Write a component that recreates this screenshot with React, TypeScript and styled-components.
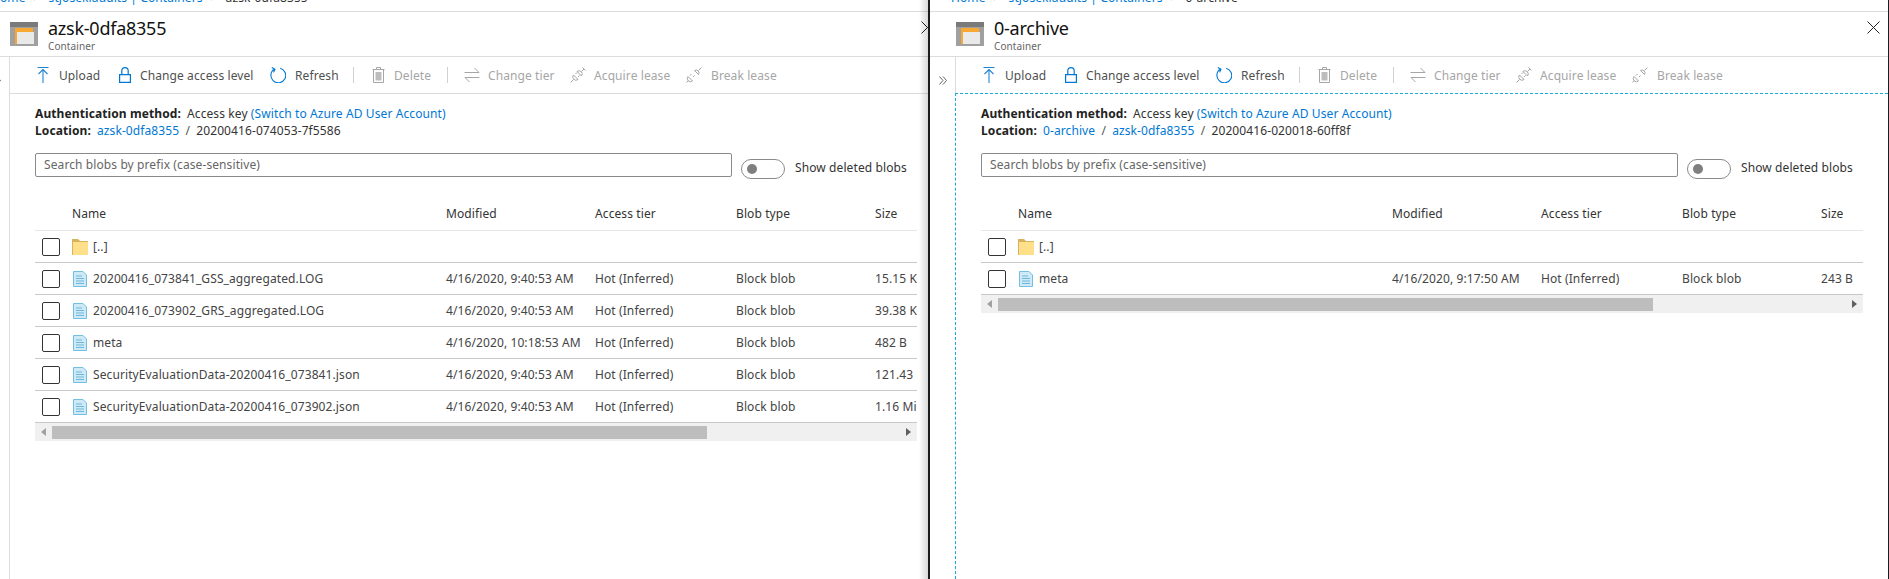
import React from 'react'
import styled, { createGlobalStyle } from 'styled-components'

const GlobalStyle = createGlobalStyle`
  html, body {
    margin: 0;
    padding: 0;
    background: #1b1c20;
  }
  * {
    box-sizing: border-box;
  }
`;

const Page = styled.div`
  display: flex;
  gap: 2px;
  position: relative;
  width: 1889px;
  height: 579px;
  overflow: hidden;
  background: #1b1c20;
  font-family: "Noto Sans", "Open Sans", sans-serif;
  font-size: 12px;
  letter-spacing: 0.1px;
  color: #333;
`;

const Pane = styled.section<{ $width: number }>`
  display: flex;
  flex-direction: column;
  flex: none;
  width: ${(p) => p.$width}px;
  height: 100%;
  overflow: hidden;
  background: #fff;
`;

const ShadowEdge = styled.div`
  position: absolute;
  top: 0;
  left: 919px;
  width: 9px;
  height: 579px;
  background: linear-gradient(to right, rgba(0, 0, 0, 0), rgba(0, 0, 0, 0.15));
`;

const Breadcrumb = styled.nav<{ $x: number }>`
  display: flex;
  flex: none;
  height: 12px;
  padding-left: ${(p) => (p.$x > 0 ? p.$x : 0)}px;
  overflow: hidden;
  border-bottom: 1px solid #dcdcdc;
  white-space: nowrap;
  line-height: 16px;

  > div {
    display: flex;
    margin-top: -10px;
    margin-left: ${(p) => (p.$x < 0 ? p.$x : 0)}px;
  }
`;

const Crumb = styled.span`
  color: #0078d4;
`;

const CrumbSep = styled.span`
  width: 23px;
  text-align: center;
  color: #8a8a8a;
`;

const Header = styled.header<{ $left: number }>`
  display: flex;
  flex: none;
  align-items: flex-start;
  height: 45px;
  padding: 10px 0 0 ${(p) => p.$left}px;
  border-bottom: 1px solid #dcdcdc;
`;

const HeaderIcon = styled.svg`
  flex: none;
  width: 28px;
  height: 24px;
  margin-right: 10px;
`;

const HeaderText = styled.div`
  flex: 1;
  min-width: 0;
  margin-top: -6px;
`;

const Title = styled.h1`
  margin: 0;
  font-size: 18px;
  font-weight: 400;
  letter-spacing: -0.25px;
  line-height: 24px;
  color: #111;
`;

const Subtitle = styled.div`
  font-size: 10px;
  line-height: 12px;
  color: #666;
`;

const CloseButton = styled.svg<{ $right: number }>`
  flex: none;
  width: 13px;
  height: 13px;
  margin: -1px ${(p) => p.$right}px 0 0;
`;

const Body = styled.div`
  display: flex;
  flex: 1;
  min-height: 0;
`;

const Sidebar = styled.div<{ $width: number }>`
  display: flex;
  flex: none;
  justify-content: flex-end;
  width: ${(p) => p.$width}px;
  padding: 19px 8px 0 0;
`;

const Chevrons = styled.svg`
  flex: none;
  width: 8px;
  height: 9px;
`;

const Main = styled.div`
  display: flex;
  flex: 1;
  flex-direction: column;
  min-width: 0;
`;

const Toolbar = styled.div`
  display: flex;
  flex: none;
  align-items: center;
  height: 36px;
  padding-left: 27px;
  border-left: 1px solid #dcdcdc;
`;

const ToolButton = styled.div<{ $width: number; $disabled?: boolean }>`
  display: flex;
  flex: none;
  align-items: center;
  width: ${(p) => p.$width}px;
  color: ${(p) => (p.$disabled ? '#a6a6a6' : '#505050')};
  white-space: nowrap;
`;

const ToolIcon = styled.svg<{ $gap: number }>`
  flex: none;
  width: 16px;
  height: 16px;
  margin-right: ${(p) => p.$gap}px;
`;

const ToolSep = styled.div<{ $after: number }>`
  flex: none;
  width: 1px;
  height: 16px;
  margin-right: ${(p) => p.$after}px;
  background: #d0d0d0;
`;

const Content = styled.div<{ $focused?: boolean }>`
  flex: 1;
  padding: 11px 0 0 25px;
  border-left: 1px ${(p) => (p.$focused ? 'dashed #1aa9d8' : 'solid #dcdcdc')};
  border-top: 1px ${(p) => (p.$focused ? 'dashed #1aa9d8' : 'solid #dcdcdc')};
`;

const InfoLine = styled.div`
  display: flex;
  height: 17px;
  line-height: 17px;
  color: #333;
  white-space: nowrap;
`;

const InfoLabel = styled.span`
  margin-right: 6px;
  font-weight: 700;
  color: #222;
`;

const InfoLink = styled.span`
  color: #0078d4;
`;

const PathSep = styled.span`
  width: 17px;
  text-align: center;
  color: #555;
`;

const SearchRow = styled.div`
  display: flex;
  align-items: flex-start;
  margin-top: 14px;
`;

const SearchBox = styled.div`
  flex: none;
  width: 697px;
  height: 24px;
  padding-left: 8px;
  border: 1px solid #8a8a8a;
  border-radius: 2px;
  line-height: 22px;
  color: #666;
`;

const Toggle = styled.div`
  display: flex;
  flex: none;
  align-items: center;
  width: 44px;
  height: 20px;
  margin: 6px 10px 0 9px;
  padding-left: 5px;
  border: 1px solid #8a8a8a;
  border-radius: 10px;
`;

const ToggleKnob = styled.div`
  width: 10px;
  height: 10px;
  border-radius: 50%;
  background: #7f7f7f;
`;

const ToggleLabel = styled.div`
  margin-top: 6px;
  line-height: 18px;
  color: #333;
  white-space: nowrap;
`;

const Table = styled.div`
  width: 882px;
  margin-top: 20px;
  overflow: hidden;
`;

const Row = styled.div<{ $head?: boolean }>`
  display: grid;
  grid-template-columns: 37px 374px 149px 141px 139px 42px;
  align-items: center;
  height: 32px;
  padding-bottom: ${(p) => (p.$head ? 2 : 0)}px;
  border-bottom: 1px solid ${(p) => (p.$head ? '#e6e6e6' : '#c8c8c8')};
  white-space: nowrap;
  color: ${(p) => (p.$head ? '#333' : '#444')};
`;

const CheckCell = styled.div`
  display: flex;
  padding-left: 7px;
`;

const Checkbox = styled.div`
  width: 18px;
  height: 18px;
  border: 1px solid #333;
  border-radius: 2px;
  background: #fff;
`;

const NameCell = styled.div`
  display: flex;
  align-items: center;
`;

const FileIcon = styled.svg`
  flex: none;
  width: 16px;
  height: 16px;
  margin-right: 5px;
`;

const ScrollTrack = styled.div`
  display: flex;
  align-items: center;
  justify-content: space-between;
  position: relative;
  width: 882px;
  height: 18px;
  padding: 0 6px;
  background: #f0f0f0;
`;

const ScrollThumb = styled.div`
  position: absolute;
  top: 3px;
  left: 17px;
  width: 655px;
  height: 13px;
  background: #bdbdbd;
`;

const ScrollArrow = styled.svg`
  flex: none;
  width: 5px;
  height: 8px;
`;

const ContainerIcon = () => (
  <HeaderIcon viewBox="0 0 28 24">
    <rect width="28" height="24" fill="#a0a0a0" />
    <rect width="28" height="5" fill="#7a7a7a" />
    <rect x="5" y="6" width="18" height="16" fill="#f7a833" />
    <rect x="7" y="10" width="17" height="12" fill="#e9e9e9" />
  </HeaderIcon>
)

const UploadIcon = () => (
  <ToolIcon $gap={6} viewBox="0 0 16 16" fill="none" stroke="#1e86d6" strokeWidth="1.1">
    <path d="M0.5 0.5H11.5M6 16V2.5M1.5 7L6 2.5L10.5 7" />
  </ToolIcon>
)

const LockIcon = () => (
  <ToolIcon $gap={5} viewBox="0 0 16 16" fill="none" stroke="#0078d4" strokeWidth="1.2">
    <path d="M0.6 7.6H11.4V15.4H0.6ZM2.8 7.6V3.8C2.8 1.8 4 0.6 6 0.6C8 0.6 9.2 1.8 9.2 3.8V7.6" />
  </ToolIcon>
)

const RefreshIcon = () => (
  <ToolIcon $gap={9} viewBox="0 0 16 16" fill="none" stroke="#0078d4" strokeWidth="1.1">
    <path d="M4.5 2A7.4 7.4 0 1 0 10.2 1.2M1.8 0.6L5 2.2L3.6 5.4" />
  </ToolIcon>
)

const DeleteIcon = () => (
  <ToolIcon $gap={6} viewBox="0 0 16 16" fill="none" stroke="#a6a6a6" strokeWidth="1">
    <path d="M0.5 2.5H12.5M4.5 2.5V0.5H8.5V2.5M1.5 2.5V15.5H11.5V2.5" />
    <rect x="3.5" y="5" width="6" height="8.5" fill="#bdbdbd" stroke="none" />
  </ToolIcon>
)

const TierIcon = () => (
  <ToolIcon $gap={8} viewBox="0 0 16 16" fill="none" stroke="#a6a6a6" strokeWidth="1">
    <path d="M0.5 5.5H15M10.5 1L15 5.5M15.5 10.5H1M5.5 15L1 10.5" />
  </ToolIcon>
)

const AcquireIcon = () => (
  <ToolIcon $gap={8} viewBox="0 0 16 16" fill="none" stroke="#a6a6a6" strokeWidth="1">
    <path d="M0.5 15.5L3.5 12.5M3.5 8L8 12.5A3.2 3.2 0 0 1 3.5 8ZM5.5 7L7 5.5M8 10L9.5 8.5" />
    <path d="M7 4.5L11.5 9A3.2 3.2 0 0 0 7 4.5ZM11.5 4.5L14 2M12.5 0.5L15.5 3.5" />
  </ToolIcon>
)

const BreakIcon = () => (
  <ToolIcon $gap={9} viewBox="0 0 16 16" fill="none" stroke="#a6a6a6" strokeWidth="1">
    <path d="M0.5 15.5L2.5 13.5M2 9.5L6.5 14A3.2 3.2 0 0 1 2 9.5ZM4 8.5L5.5 7M7 10L8.5 8.5" />
    <path d="M8.5 3.5L12.5 7.5A2.9 2.9 0 0 0 8.5 3.5ZM12.5 3.5L15.5 0.5" />
  </ToolIcon>
)

const CloseIcon = ({ right }: { right: number }) => (
  <CloseButton $right={right} viewBox="0 0 13 13" fill="none" stroke="#222" strokeWidth="1">
    <path d="M0.5 0.5L12.5 12.5M12.5 0.5L0.5 12.5" />
  </CloseButton>
)

const FolderIcon = () => (
  <FileIcon viewBox="0 0 16 16">
    <path d="M0 0H6L8 2H16V16H0Z" fill="#d8b25c" />
    <rect x="1" y="3" width="15" height="13" fill="#ffe08a" />
  </FileIcon>
)

const DocIcon = () => (
  <FileIcon viewBox="0 0 16 16" fill="none">
    <path d="M1.5 0.5H11L14.5 4V15.5H1.5Z" fill="#cfe9f7" stroke="#72bfe2" />
    <path d="M4 5H10M4 7.5H12M4 10H12M4 12.5H12" stroke="#6bb8dd" />
  </FileIcon>
)

type Blob = { name: string; modified: string; size: string }

type Blade = {
  width: number
  crumbX: number
  headerLeft: number
  closeRight: number
  sidebar: number
  title: string
  focused?: boolean
  parents: string[]
  folder: string
  blobs: Blob[]
}

const blades: Blade[] = [
  {
    width: 928,
    crumbX: -9,
    headerLeft: 10,
    closeRight: -6,
    sidebar: 9,
    title: 'azsk-0dfa8355',
    parents: ['azsk-0dfa8355'],
    folder: '20200416-074053-7f5586',
    blobs: [
      { name: '20200416_073841_GSS_aggregated.LOG', modified: '4/16/2020, 9:40:53 AM', size: '15.15 KiB' },
      { name: '20200416_073902_GRS_aggregated.LOG', modified: '4/16/2020, 9:40:53 AM', size: '39.38 KiB' },
      { name: 'meta', modified: '4/16/2020, 10:18:53 AM', size: '482 B' },
      { name: 'SecurityEvaluationData-20200416_073841.json', modified: '4/16/2020, 9:40:53 AM', size: '121.43 KiB' },
      { name: 'SecurityEvaluationData-20200416_073902.json', modified: '4/16/2020, 9:40:53 AM', size: '1.16 MiB' },
    ],
  },
  {
    width: 958,
    crumbX: 21,
    headerLeft: 26,
    closeRight: 8,
    sidebar: 25,
    title: '0-archive',
    focused: true,
    parents: ['0-archive', 'azsk-0dfa8355'],
    folder: '20200416-020018-60ff8f',
    blobs: [{ name: 'meta', modified: '4/16/2020, 9:17:50 AM', size: '243 B' }],
  },
]

export default function App() {
  return (
    <Page>
      <GlobalStyle />
      {blades.map((blade) => (
        <Pane key={blade.title} $width={blade.width}>
          <Breadcrumb $x={blade.crumbX}>
            <div>
              <Crumb>Home</Crumb>
              <CrumbSep>&gt;</CrumbSep>
              <Crumb>stjoseklaudits | Containers</Crumb>
              <CrumbSep>&gt;</CrumbSep>
              <span>{blade.title}</span>
            </div>
          </Breadcrumb>
          <Header $left={blade.headerLeft}>
            <ContainerIcon />
            <HeaderText>
              <Title>{blade.title}</Title>
              <Subtitle>Container</Subtitle>
            </HeaderText>
            <CloseIcon right={blade.closeRight} />
          </Header>
          <Body>
            <Sidebar $width={blade.sidebar}>
              <Chevrons viewBox="0 0 8 9" fill="none" stroke="#666" strokeWidth="1">
                <path d="M0.5 0.5L4 4.5L0.5 8.5M4 0.5L7.5 4.5L4 8.5" />
              </Chevrons>
            </Sidebar>
            <Main>
              <Toolbar>
                <ToolButton $width={82}><UploadIcon />Upload</ToolButton>
                <ToolButton $width={151}><LockIcon />Change access level</ToolButton>
                <ToolButton $width={83}><RefreshIcon />Refresh</ToolButton>
                <ToolSep $after={18} />
                <ToolButton $width={75} $disabled><DeleteIcon />Delete</ToolButton>
                <ToolSep $after={16} />
                <ToolButton $width={106} $disabled><TierIcon />Change tier</ToolButton>
                <ToolButton $width={116} $disabled><AcquireIcon />Acquire lease</ToolButton>
                <ToolButton $width={100} $disabled><BreakIcon />Break lease</ToolButton>
              </Toolbar>
              <Content $focused={blade.focused}>
                <InfoLine>
                  <InfoLabel>Authentication method:</InfoLabel>
                  Access key&nbsp;<InfoLink>(Switch to Azure AD User Account)</InfoLink>
                </InfoLine>
                <InfoLine>
                  <InfoLabel>Location:</InfoLabel>
                  {blade.parents.map((part) => (
                    <React.Fragment key={part}>
                      <InfoLink>{part}</InfoLink>
                      <PathSep>/</PathSep>
                    </React.Fragment>
                  ))}
                  {blade.folder}
                </InfoLine>
                <SearchRow>
                  <SearchBox>Search blobs by prefix (case-sensitive)</SearchBox>
                  <Toggle><ToggleKnob /></Toggle>
                  <ToggleLabel>Show deleted blobs</ToggleLabel>
                </SearchRow>
                <Table>
                  <Row $head>
                    <div />
                    <div>Name</div>
                    <div>Modified</div>
                    <div>Access tier</div>
                    <div>Blob type</div>
                    <div>Size</div>
                  </Row>
                  <Row>
                    <CheckCell><Checkbox /></CheckCell>
                    <NameCell><FolderIcon />[..]</NameCell>
                  </Row>
                  {blade.blobs.map((blob) => (
                    <Row key={blob.name}>
                      <CheckCell><Checkbox /></CheckCell>
                      <NameCell><DocIcon />{blob.name}</NameCell>
                      <div>{blob.modified}</div>
                      <div>Hot (Inferred)</div>
                      <div>Block blob</div>
                      <div>{blob.size}</div>
                    </Row>
                  ))}
                </Table>
                <ScrollTrack>
                  <ScrollArrow viewBox="0 0 5 8"><path d="M5 0V8L0 4Z" fill="#a0a0a0" /></ScrollArrow>
                  <ScrollThumb />
                  <ScrollArrow viewBox="0 0 5 8"><path d="M0 0V8L5 4Z" fill="#606060" /></ScrollArrow>
                </ScrollTrack>
              </Content>
            </Main>
          </Body>
        </Pane>
      ))}
      <ShadowEdge />
    </Page>
  )
}
